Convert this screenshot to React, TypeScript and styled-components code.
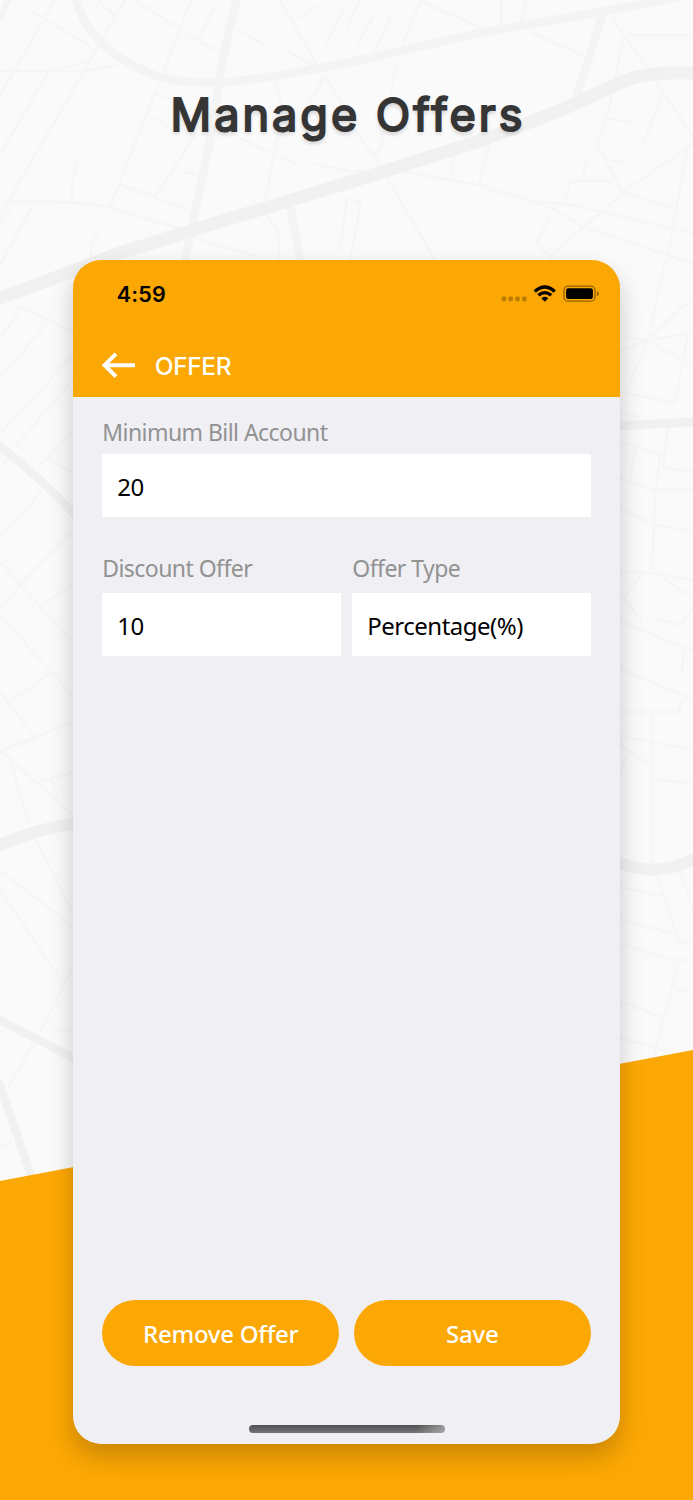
import React from "react";
import styled, { createGlobalStyle } from "styled-components";

const ORANGE = "#fba704";

const GlobalStyle = createGlobalStyle`
  * { box-sizing: border-box; }
  body { margin: 0; background: #fafafa; }
`;

const Page = styled.main`
  position: relative;
  width: 693px;
  height: 1500px;
  overflow: hidden;
  display: flex;
  flex-direction: column;
  align-items: center;
  font-family: "Noto Sans", "Open Sans", sans-serif;
`;

const Backdrop = styled.svg`
  position: absolute;
  inset: 0;
  width: 693px;
  height: 1500px;
`;

const Title = styled.h1`
  position: relative;
  margin: 0;
  height: 260px;
  padding: 85px 0 0 3px;
  font: 400 45px/60px Inter, sans-serif;
  letter-spacing: 3px;
  white-space: nowrap;
  color: #353535;
  -webkit-text-stroke: 2px #353535;
  stroke-linejoin: round;
  text-shadow: 0 3px 4px rgba(0, 0, 0, 0.2);
`;

const Phone = styled.section`
  position: relative;
  width: 546.6px;
  height: 1183.6px;
  display: flex;
  flex-direction: column;
  border-radius: 28px;
  background: #efeff4;
  box-shadow: 0 12px 24px rgba(0, 0, 0, 0.2);
`;

const Header = styled.header`
  height: 137px;
  border-radius: 28px 28px 0 0;
  background: ${ORANGE};
`;

const StatusBar = styled.div`
  height: 68px;
  padding: 0 20px 0 43.5px;
  display: flex;
  align-items: center;
  justify-content: space-between;
`;

const Clock = styled.span`
  font: 600 21.5px/26px Inter, sans-serif;
  letter-spacing: 0.2px;
  color: #000;
`;

const NavBar = styled.div`
  height: 69px;
  padding: 5px 0 0 29px;
  display: flex;
  align-items: center;
  gap: 18.6px;
`;

const NavTitle = styled.span`
  padding-top: 1px;
  font: 500 24.5px/30px Inter, sans-serif;
  letter-spacing: -0.4px;
  color: #fff;
`;

const Form = styled.form`
  flex: 1;
  padding: 20px 29px 0;
  display: flex;
  flex-direction: column;
`;

const FieldRow = styled.div`
  display: flex;
  gap: 11.6px;
  margin-top: 36px;
`;

const Field = styled.div<{ $grow?: boolean }>`
  flex: ${(p) => (p.$grow ? 1 : "none")};
  display: flex;
  flex-direction: column;
`;

const Label = styled.label<{ $gap: number }>`
  height: 30px;
  margin-bottom: ${(p) => p.$gap}px;
  font-size: 23px;
  line-height: 30px;
  letter-spacing: -0.55px;
  white-space: nowrap;
  color: #929292;
`;

const Value = styled.div`
  height: 63px;
  padding: 2px 0 0 15px;
  display: flex;
  align-items: center;
  background: #fff;
  color: #000;
  font-size: 24px;
  letter-spacing: -0.5px;
`;

const Actions = styled.div`
  display: flex;
  gap: 14.6px;
  padding: 0 29px;
`;

const PillButton = styled.button`
  flex: 1;
  height: 65.6px;
  padding: 2px 0 0;
  border: 0;
  border-radius: 33px;
  background: ${ORANGE};
  color: #fff;
  font: 500 24px/32px "Noto Sans", sans-serif;
  letter-spacing: -0.25px;
`;

const HomeIndicator = styled.div`
  width: 196px;
  height: 7.6px;
  margin: 59.5px auto 11px;
  border-radius: 4px;
  background: linear-gradient(100deg, transparent 85%, rgba(200, 200, 200, 0.6) 100%),
    linear-gradient(#505052, #747476);
`;

const thinRoads = [
  "M55 0L0 95M125 0L72 92L0 215M30 10L90 46M98 0L115 16M135 0L177 27M191 0L163 73",
  "M185 33L222 54M214 8L200 36M235 27L265 46M280 0L318 67M295 20L320 5M287 50L312 66",
  "M0 71H85L118 65M45 72L87 62M48 72L0 155M158 85L110 207M155 93L178 102M148 114L172 128",
  "M195 135L155 197M180 173H197M118 184L190 210M78 162Q70 180 72 203M0 202Q70 200 110 207L180 229",
  "M32 207L0 265M12 205L0 222M98 233Q90 245 90 260M240 138L297 165M275 82L283 110L265 200",
  "M325 76L343 105M324 78L305 110M267 217Q278 228 279 240V262M195 238L262 258M347 200L340 250",
  "M360 0L347 28M373 16L357 46M391 17L374 52M421 0L402 45M421 1L485 30M501 0V26M526 0L520 26",
  "M532 33L583 55M343 10L326 45M397 61L391 94M355 130L377 160L435 260M382 130V145L374 155",
  "M315 164Q360 175 400 171L478 185L530 201Q545 203 584 227L693 264M454 155L450 180M490 143L479 184",
  "M611 17L647 68M628 35H693M623 39L610 105L597 145L623 192L694 143M607 118L633 123M663 94L643 143",
  "M656 82L693 136M605 160L627 162M587 156L583 177M613 181H571L564 203M624 193L676 209",
  "M623 193L550 256M535 202L567 204L693 233M688 145L667 260M549 216L537 243L552 260",
  "M347 198L361 202L350 260M665 260L648 340L630 382M693 297L648 340L620 351M620 336L648 340L693 333",
  "M648 340L693 367M688 333L675 403L620 392M620 413L640 417M620 440L660 455L655 500L652 570",
  "M636 446L630 479M620 478Q643 489 660 490H693M660 467L693 472M668 427L663 466M620 508L655 525L693 531",
  "M620 572H643L693 580M643 572L624 598L642 622M653 570L693 599M657 618L680 625L693 608",
  "M620 620L648 633L693 651M684 651L682 671M620 669L660 686L693 700M682 699L679 712H620",
  "M620 736L693 750M620 744L651 766M628 754L620 772M652 714V865M655 779L693 784",
  "M657 875L679 943L693 940M680 870L693 909M620 887L662 896M620 919L672 934M620 944L670 960H693",
  "M678 963L654 1056M675 988L693 993M620 1002L662 1017M620 1038L669 1052",
  "M17 306L73 331M20 311L0 339M47 323L0 378M73 355L0 434M73 380L16 446M73 432L38 468M48 459L73 473",
  "M10 458L0 466M42 491L0 537M73 530L18 587L0 610M0 562L73 643M73 584L40 607M0 615L73 696M50 673L12 701",
  "M0 692L35 737M0 751L72 722M0 750L73 815M10 760L29 825M40 782L73 772M51 778L57 797M0 750L35 740",
  "M36 840L73 912M0 870L73 927M0 890L61 980M73 967L40 1033L8 1088M55 1030H73M0 1147L12 1142",
];

const MapBackdrop = () => (
  <Backdrop viewBox="0 0 693 1500" aria-hidden="true">
    <rect width="693" height="1500" fill="#fafafa" />
    <g fill="none" stroke="#f6f6f6" strokeWidth="2.6">
      {thinRoads.map((d) => (
        <path key={d} d={d} />
      ))}
    </g>
    <g fill="none" stroke="#f4f4f4" strokeWidth="8.5">
      <path d="M75 -4C85 38 120 63 160 77C210 91 275 76 347 63L480 33L600 12L680 -3" />
      <path d="M237 -2L222 62L213 125L193 222L185 262" />
      <path d="M290 205L301 264M603 13L576 98" />
      <path d="M9 -2L-1 20" strokeWidth="6" />
    </g>
    <g fill="none" stroke="#f1f1f1">
      <path
        d="M-2 299L73 271L117 254L190 231L347 183L480 141L546 116L579 102L613 86Q638 73 670 73H695"
        strokeWidth="13"
      />
      <path d="M-2 445Q38 475 75 515M-2 1019L75 1059M-2 1080L32 1178" strokeWidth="8.5" />
      <path d="M-2 846Q34 830 75 823M618 862Q658 879 695 858" strokeWidth="12" />
      <path d="M618 426L695 422" strokeWidth="9" />
    </g>
    <path d="M0 1181L693 1050V1500H0Z" fill={ORANGE} />
  </Backdrop>
);

const StatusIcons = () => (
  <svg width="100" height="18" viewBox="0 0 100 18" aria-hidden="true">
    <g fill="#000" fillOpacity="0.25">
      <rect x="1.6" y="11.6" width="4.6" height="4.6" rx="1.6" />
      <rect x="8.4" y="11.6" width="4.6" height="4.6" rx="1.6" />
      <rect x="15.2" y="11.6" width="4.6" height="4.6" rx="1.6" />
      <rect x="22" y="11.6" width="4.6" height="4.6" rx="1.6" />
    </g>
    <g fill="none" stroke="#000" strokeWidth="3.3">
      <path d="M34.8 6.4Q44.8 -2.4 54.8 6.4" />
      <path d="M38.4 10.3Q44.8 4.9 51.2 10.3" />
    </g>
    <path d="M41.4 13.2Q44.8 10.3 48.2 13.2L44.8 16.8Z" />
    <rect x="64" y="1.2" width="31" height="15" rx="4" fill="none" stroke="#000" strokeOpacity="0.42" strokeWidth="1.3" />
    <rect x="66.1" y="3.3" width="26.8" height="10.8" rx="2" />
    <path d="M96.8 6.2Q98.8 6.9 98.8 8.7T96.8 11.2Z" fillOpacity="0.42" />
  </svg>
);

const BackArrow = () => (
  <svg width="34" height="28" viewBox="0 0 34 28" fill="none" stroke="#fff" strokeWidth="4" aria-hidden="true">
    <path d="M14 2.8L2.6 14.2L14 25.6M2.6 14.2H33" />
  </svg>
);

export default function App() {
  return (
    <Page>
      <GlobalStyle />
      <MapBackdrop />
      <Title>Manage Offers</Title>
      <Phone>
        <Header>
          <StatusBar>
            <Clock>4:59</Clock>
            <StatusIcons />
          </StatusBar>
          <NavBar>
            <BackArrow />
            <NavTitle>OFFER</NavTitle>
          </NavBar>
        </Header>
        <Form>
          <Field>
            <Label $gap={7}>Minimum Bill Account</Label>
            <Value>20</Value>
          </Field>
          <FieldRow>
            <Field $grow>
              <Label $gap={9.5}>Discount Offer</Label>
              <Value>10</Value>
            </Field>
            <Field $grow>
              <Label $gap={9.5}>Offer Type</Label>
              <Value>Percentage(%)</Value>
            </Field>
          </FieldRow>
        </Form>
        <Actions>
          <PillButton type="button">Remove Offer</PillButton>
          <PillButton type="button">Save</PillButton>
        </Actions>
        <HomeIndicator />
      </Phone>
    </Page>
  );
}
